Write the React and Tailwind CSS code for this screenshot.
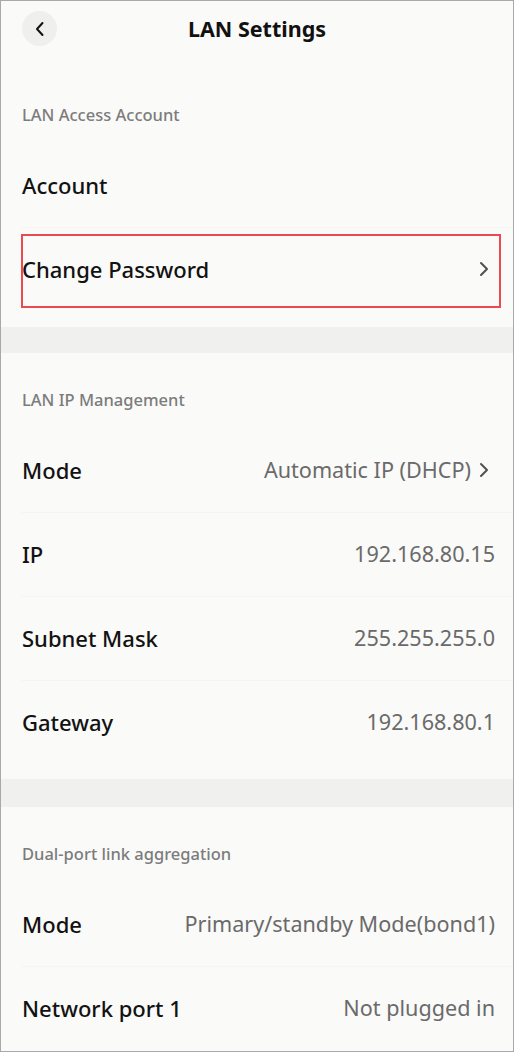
import React from "react";

const font = { fontFamily: '"Noto Sans", "Open Sans", sans-serif' };

function Chevron() {
  return (
    <svg width="12" height="18" viewBox="0 0 12 18" className="ml-[7px] mr-[5px] shrink-0">
      <path d="M3 3 L9 9 L3 15" fill="none" stroke="#505050" strokeWidth="2" strokeLinecap="round" strokeLinejoin="round" />
    </svg>
  );
}

function Label({ children, h }) {
  return (
    <div className={`flex items-end px-[21px] pb-[18px] ${h}`}>
      <span className="text-[16.5px] font-medium leading-[21px] text-[#7c7c7c]">{children}</span>
    </div>
  );
}

function Row({ label, value, chevron, divider, boxed }) {
  return (
    <div className="relative h-[84px]">
      {divider && <div className="absolute left-[21px] right-0 top-0 h-px bg-[#f4f4f2]" />}
      <div className="flex h-full items-center justify-between pl-[21px] pr-[18px]">
        <span className="text-[22px] font-medium text-[#121212]">{label}</span>
        <span className="flex items-center text-[21.6px] text-[#6a6a6a]">
          {value}
          {chevron && <Chevron />}
        </span>
      </div>
      {boxed && (
        <div className="pointer-events-none absolute left-[20px] right-[12px] top-[7px] bottom-[3px] border-2 border-[#ec4a53]" />
      )}
    </div>
  );
}

export default function App() {
  return (
    <div style={font} className="h-[1052px] w-[514px] overflow-hidden border border-[#a9a9a9] bg-[#fafaf9]">
      <div className="relative flex h-[58px] items-center justify-center">
        <div className="absolute left-[21px] top-[10px] flex h-[35px] w-[35px] items-center justify-center rounded-full bg-[#efefee]">
          <svg width="14" height="18" viewBox="0 0 14 18">
            <path d="M9.5 3 L4 9 L9.5 15" fill="none" stroke="#111" strokeWidth="2" strokeLinecap="round" strokeLinejoin="round" />
          </svg>
        </div>
        <span className="-mt-[2px] text-[21.5px] font-bold text-[#111]">LAN Settings</span>
      </div>

      <Label h="h-[84px]">LAN Access Account</Label>
      <Row label="Account" />
      <Row label="Change Password" chevron divider boxed />
      <div className="h-[16px]" />
      <div className="h-[26px] bg-[#f0f0ef]" />

      <Label h="h-[75px]">LAN IP Management</Label>
      <Row label="Mode" value="Automatic IP (DHCP)" chevron />
      <Row label="IP" value="192.168.80.15" divider />
      <Row label="Subnet Mask" value="255.255.255.0" divider />
      <Row label="Gateway" value="192.168.80.1" divider />
      <div className="h-[15px]" />
      <div className="h-[28px] bg-[#f0f0ef]" />

      <Label h="h-[75px]">Dual-port link aggregation</Label>
      <Row label="Mode" value="Primary/standby Mode(bond1)" />
      <Row label="Network port 1" value="Not plugged in" divider />
    </div>
  );
}
